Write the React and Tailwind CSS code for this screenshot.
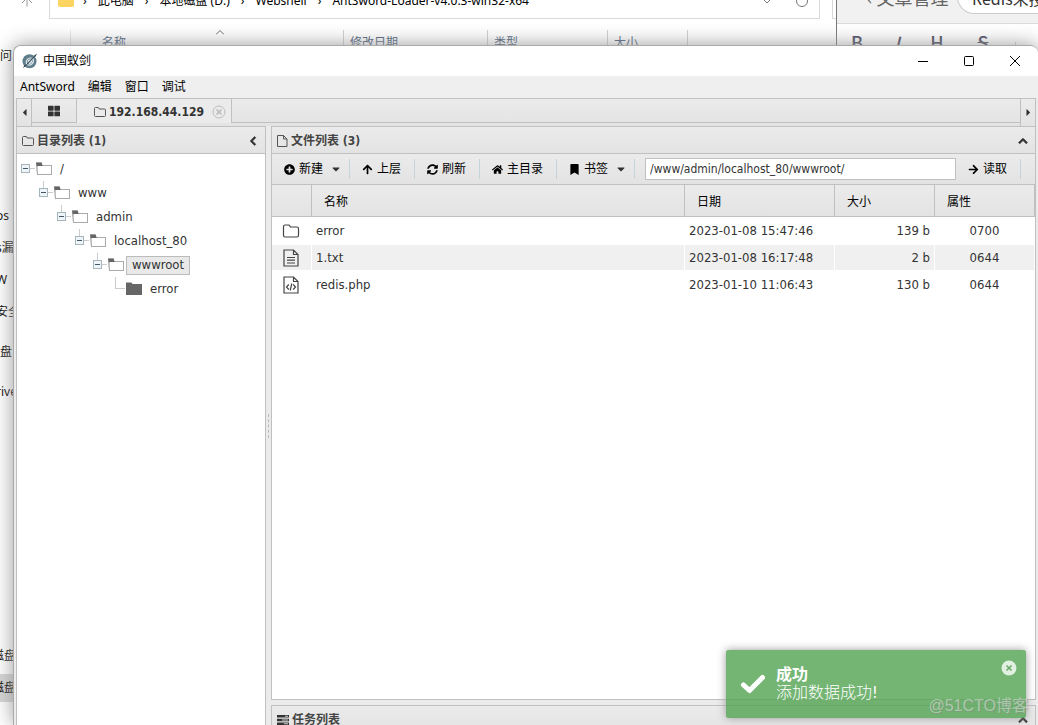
import {
    FaArrowRight,
    FaArrowUp,
    FaBookmark,
    FaCaretDown,
    FaCaretLeft,
    FaCaretRight,
    FaChevronLeft,
    FaChevronUp,
    FaHome,
    FaPlusCircle,
    FaSyncAlt,
    FaThLarge,
} from 'react-icons/fa';

const tree = {
    name: '/',
    children: [{
        name: 'www',
        children: [{
            name: 'admin',
            children: [{
                name: 'localhost_80',
                children: [{
                    name: 'wwwroot',
                    selected: true,
                    children: [{ name: 'error' }],
                }],
            }],
        }],
    }],
};

const files = [
    { icon: 'folder', name: 'error', date: '2023-01-08 15:47:46', size: '139 b', attr: '0700' },
    { icon: 'text', name: '1.txt', date: '2023-01-08 16:17:48', size: '2 b', attr: '0644' },
    { icon: 'code', name: 'redis.php', date: '2023-01-10 11:06:43', size: '130 b', attr: '0644' },
];

const sidebar = [
    { text: '问', pos: 'top-[47px] left-0' },
    { text: 'os', pos: 'top-[207px] -left-1' },
    { text: 's漏', pos: 'top-[239px] -left-1' },
    { text: 'W', pos: 'top-[271px] -left-1' },
    { text: '安全', pos: 'top-[303px] -left-1' },
    { text: '盘', pos: 'top-[343px] left-0' },
    { text: 'rive', pos: 'top-[383px] -left-1' },
    { text: '磁盘', pos: 'top-[647px] -left-2' },
    { text: '磁盘', pos: 'top-[679px] -left-2' },
];

/* ---------- icons ---------- */

const FolderOutline = ({ className }) => (
    <svg viewBox="0 0 12 10" className={className} fill="none" stroke="#555" aria-hidden="true">
        <path d="M.5 8.5v-7q0-1 1-1h2.500q.8 0 .9 1l.1.5h5.500q1 0 1 1v5.500q0 1-1 1H1.500q-1 0-1-1z" />
    </svg>
);

const FileOutline = ({ className }) => (
    <svg viewBox="0 0 11 12" className={className} fill="none" stroke="#555" aria-hidden="true">
        <path d="M.5.5h6l3.500 3.500v7.500H.5zM6.500.5V4H10" />
    </svg>
);

const Logo = () => (
    <svg viewBox="0 0 16 16" className="size-4" aria-hidden="true">
        <circle cx="7.500" cy="8.300" r="7" fill="#607d8b" />
        <path d="M4.800 11.500C3 8 6 4.200 9.500 5.200M10.800 5.500c2 4-1.500 7.500-5.300 6.300M6.300 9.500q-.3-2.500 2.500-2.700M9.500 7.500q.2 2.500-2.500 3" fill="none" stroke="#dfe8ec" strokeWidth="1.200" />
        <path d="M.8 15.200 2.500 12 4 12.500zM11.500 3l3.700-2.500-2 3.500z" fill="#37474f" />
        <path d="M2 14 14 2" stroke="#37474f" strokeWidth=".8" />
    </svg>
);

const Tasks = () => (
    <svg viewBox="0 0 12 10" className="h-[10px] w-3" aria-hidden="true">
        <path d="M0 0h12v2.500H0zM0 3.700h12v2.500H0zM0 7.400h12v2.500H0z" fill="#333" />
        <path d="M8 .8h3v1H8zM5 4.500h6v1H5zM7 8.200h4v1H7z" fill="#ccc" />
    </svg>
);

const FileIcon = ({ type }) => {
    if (type === 'folder') {
        return (
            <svg viewBox="0 0 18 18" className="size-[18px]" fill="none" stroke="#444" strokeWidth="1.200" aria-hidden="true">
                <path d="M1.500 13.500v-9q0-1.500 1.500-1.500h3.500q1 0 1.300.8l.5 1.200H15q1.500 0 1.500 1.500v7q0 1.500-1.500 1.500H3q-1.500 0-1.500-1.500z" />
            </svg>
        );
    }
    return (
        <svg viewBox="0 0 18 18" className="size-[18px]" fill="none" stroke="#444" strokeWidth="1.200" aria-hidden="true">
            <path d="M2 1h9.500L16 5.500V17H2zM11.500 1v4.500H16" />
            {type === 'text'
                ? <path d="M5 8.500h8M5 11.200h8M5 14h8" />
                : <path d="M6.800 8.500 4.500 11l2.300 2.500M11.200 8.500l2.300 2.500-2.300 2.500M9.800 7.500l-1.600 7" />}
        </svg>
    );
};

const TreeFolder = ({ open }) => (
    <svg viewBox="0 0 18 24" className="h-6 w-[18px]" aria-hidden="true">
        {open ? (
            <>
                <path d="M1 5.500h6V8h10v10H2L1 9z" fill="#aaa" />
                <path d="M1 5.500h5.500L7.500 8v1.500H2z" fill="#666" />
                <path d="M2.500 9H16v8H3z" fill="#fff" />
            </>
        ) : (
            <path d="M1 5.500h5.500l1 1.500H17v11H1z" fill="#666" />
        )}
    </svg>
);

/* ---------- directory tree ---------- */

const TreeNode = ({ node, depth = 0 }) => (
    <li>
        <div className="flex h-6 items-center">
            <svg viewBox="0 0 18 24" className="h-6 w-[18px]" fill="none" shapeRendering="crispEdges" aria-hidden="true">
                {depth > 0 && <path d="M8.500 0v12" stroke="#ccc" />}
                <path d="M8.500 11.500H18" stroke="#ccc" />
                {node.children && (
                    <>
                        <rect x="4.500" y="7.500" width="8" height="8" fill="#eef4f7" stroke="#a5b5bd" />
                        <path d="M6 11.500h5" stroke="#456" />
                    </>
                )}
            </svg>
            <TreeFolder open={!!node.children} />
            <button
                type="button"
                className={node.selected
                    ? 'ml-px h-[19px] border border-[#bbb] bg-[#e9e9e9] px-[5px] leading-4'
                    : 'ml-px h-[19px] border border-transparent px-[5px] leading-4'}
            >
                {node.name}
            </button>
        </div>
        {node.children && (
            <ul className="pl-[18px]">
                {node.children.map((c) => <TreeNode key={c.name} node={c} depth={depth + 1} />)}
            </ul>
        )}
    </li>
);

const PanelHeader = ({ icon, title, children }) => (
    <div className="flex h-[27px] shrink-0 items-center gap-[3px] border-b border-[#c0c0c0] bg-linear-to-b from-[#ebebeb] to-[#e3e3e3] pt-px pr-[7px] pl-[5px] text-xs font-bold text-[#444]">
        {icon}
        <h2 className="flex-1">{title}</h2>
        {children}
    </div>
);

const Chevron = ({ icon: Icon, label }) => (
    <button type="button" aria-label={label}>
        <Icon className="size-[10px] stroke-[#333] stroke-[40px] text-[#333]" />
    </button>
);

const ToolButton = ({ icon: Icon, label, menu }) => (
    <div className={menu
        ? 'flex shrink-0 items-center border-r border-[#c3d5da] pr-[7px]'
        : 'flex shrink-0 items-center border-r border-[#c3d5da] pr-[13px]'}
    >
        <button type="button" className="flex items-center gap-1 pl-3 whitespace-nowrap">
            <Icon className="h-[11px] w-auto" />
            {label}
            {menu && <FaCaretDown className="ml-[3px] h-3 w-auto text-[#333]" />}
        </button>
    </div>
);

/* ---------- windows behind ---------- */

const Explorer = () => (
    <div className="absolute inset-0 bg-white font-['Noto_Sans','Noto_Sans_CJK_SC',sans-serif] text-xs text-black">
        <div className="flex h-[19px]">
            <div className="w-[49px] pl-[21px]">
                <svg viewBox="0 0 12 8" className="h-2 w-3" fill="none" stroke="#999" aria-hidden="true">
                    <path d="M6 6.500V0M1 3l5-5 5 5" />
                </svg>
            </div>
            <div className="flex w-[771px] items-start gap-[9px] border border-t-0 border-[#d9d9d9] pl-2">
                <div className="h-[7px] w-4 rounded-b-xs bg-[#fcd462]" />
                <div className="-mt-[7px] flex flex-1 items-center gap-[11px] leading-4 whitespace-nowrap">
                    <span>›</span><span>此电脑</span>
                    <span>›</span><span>本地磁盘 (D:)</span>
                    <span>›</span><span>Webshell</span>
                    <span>›</span><span>AntSword-Loader-v4.0.3-win32-x64</span>
                </div>
                <svg viewBox="0 0 50 8" className="mr-2 h-2 w-[50px]" fill="none" stroke="#777" aria-hidden="true">
                    <path d="M2-1l4 4 4-4" />
                    <circle cx="41" cy="1" r="5.500" />
                </svg>
            </div>
            <div className="ml-3 flex-1 border-b border-l border-[#d9d9d9]" />
        </div>
        <div className="flex h-[27px] pt-[11px] text-[#4c607a]">
            <div className="w-[71px] border-r border-[#e5e5e5]" />
            <div className="relative w-[273px] border-r border-[#d0d0d0] pt-[5px] pl-[31px]">
                名称
                <svg viewBox="0 0 8 5" className="absolute top-0 left-[145px] h-[5px] w-2" fill="none" stroke="#666" aria-hidden="true">
                    <path d="M0 4.500l4-4 4 4" />
                </svg>
            </div>
            <div className="w-36 border-r border-[#d0d0d0] pt-[5px] pl-[6px]">修改日期</div>
            <div className="w-[120px] border-r border-[#d0d0d0] pt-[5px] pl-[6px]">类型</div>
            <div className="w-20 border-r border-[#d0d0d0] pt-[5px] pl-[6px]">大小</div>
        </div>
        <div className="absolute top-[674px] left-0 h-7 w-[15px] bg-[#d4d4d4]" />
        {sidebar.map((s) => (
            <span key={s.pos} className={`absolute leading-[18px] whitespace-nowrap ${s.pos}`}>{s.text}</span>
        ))}
    </div>
);

const Browser = () => (
    <div className="absolute top-0 right-0 left-[836px] h-14 border-l border-[#777] bg-white font-['Noto_Sans_CJK_SC',sans-serif]">
        <div className="flex h-6 items-start overflow-hidden border-b border-[#dcdcdc] bg-[#f1f1f1] text-lg leading-5 whitespace-nowrap text-[#666]">
            <span className="-mt-[13px] w-[120px] shrink-0 pl-[30px]">‹ 文章管理</span>
            <div className="-mt-5 h-[34px] flex-1 rounded-l-full border border-r-0 border-[#ccc] bg-white pt-[5px] pl-[14px] text-base text-[#333]">Redis未授</div>
        </div>
        <div className="flex h-8 gap-6 pt-2 pl-3 text-center text-lg leading-5 font-medium text-[#4a4a5e]">
            <span className="w-4">B</span>
            <span className="w-4 italic">I</span>
            <span className="w-4">H</span>
            <span className="ml-[6px] w-4 line-through">S</span>
            <span className="mt-[10px] border-l border-[#ccc]" />
        </div>
    </div>
);

/* ---------- main window ---------- */

const TitleBar = () => (
    <header className="flex h-[30px] shrink-0 items-center gap-[5px] bg-white pl-2 font-['Noto_Sans','Noto_Sans_CJK_SC',sans-serif] text-xs text-black">
        <Logo />
        <h1 className="flex-1">中国蚁剑</h1>
        <div className="flex gap-[26px] pr-[13px]">
            <button type="button" aria-label="最小化" className="size-5">
                <svg viewBox="0 0 20 20" stroke="#000" fill="none"><path d="M5 10.500h10" /></svg>
            </button>
            <button type="button" aria-label="最大化" className="size-5">
                <svg viewBox="0 0 20 20" stroke="#000" fill="none"><rect x="5.500" y="5.500" width="9" height="9" rx="1" /></svg>
            </button>
            <button type="button" aria-label="关闭" className="size-5">
                <svg viewBox="0 0 20 20" stroke="#000" fill="none"><path d="M5 5l10 10M15 5L5 15" /></svg>
            </button>
        </div>
    </header>
);

const MenuBar = () => (
    <nav className="flex h-[22px] shrink-0 items-center gap-[13px] bg-[#efefef] pl-[6px] font-['Noto_Sans','Noto_Sans_CJK_SC',sans-serif] text-xs text-black">
        <button type="button">AntSword</button>
        <button type="button">编辑</button>
        <button type="button">窗口</button>
        <button type="button">调试</button>
    </nav>
);

const TabBar = () => (
    <div className="flex h-7 shrink-0 border-x border-t border-[#c0c0c0] bg-linear-to-b from-[#ebebeb] to-[#e3e3e3]">
        <button type="button" aria-label="向左" className="flex w-[15px] items-center justify-center border-r border-[#c0c0c0]">
            <FaCaretLeft className="size-[11px]" />
        </button>
        <button type="button" aria-label="主页" className="flex h-6 w-[45px] items-center justify-center border-r border-b border-[#c0c0c0]">
            <FaThLarge className="size-3" />
        </button>
        <div className="flex h-6 w-[155px] items-center border-r border-[#c0c0c0] bg-[#ebebeb] pt-px pl-[17px] text-xs font-bold">
            <button type="button" className="flex items-center gap-[3px]">
                <FolderOutline className="h-[10px] w-3" />
                192.168.44.129
            </button>
            <button type="button" aria-label="关闭标签" className="ml-2">
                <svg viewBox="0 0 14 14" className="size-[14px]" fill="none" stroke="#bbb" aria-hidden="true">
                    <circle cx="7" cy="7" r="6" />
                    <path d="M4.500 4.500l5 5M9.500 4.500l-5 5" strokeWidth="1.600" />
                </svg>
            </button>
        </div>
        <div className="h-6 flex-1 border-b border-[#c0c0c0]" />
        <button type="button" aria-label="向右" className="flex w-[15px] items-center justify-center border-l border-[#c0c0c0]">
            <FaCaretRight className="size-[11px]" />
        </button>
    </div>
);

const Toolbar = () => (
    <div className="flex h-[31px] shrink-0 items-center border-b border-[#c0c0c0] bg-linear-to-b from-[#ebebeb] to-[#e3e3e3] text-xs text-black">
        <div className="flex h-5 shrink-0">
            <ToolButton icon={FaPlusCircle} label="新建" menu />
            <ToolButton icon={FaArrowUp} label="上层" />
            <ToolButton icon={FaSyncAlt} label="刷新" />
            <ToolButton icon={FaHome} label="主目录" />
            <ToolButton icon={FaBookmark} label="书签" menu />
        </div>
        <input
            type="text"
            aria-label="路径"
            defaultValue="/www/admin/localhost_80/wwwroot/"
            className="ml-[10px] h-[22px] min-w-0 flex-1 border border-[#c0c0c0] bg-white px-1 text-xs text-[#333] outline-none"
        />
        <div className="mr-[14px] flex h-5"><ToolButton icon={FaArrowRight} label="读取" /></div>
    </div>
);

const FileTable = () => (
    <table className="w-full table-fixed border-separate border-spacing-0 text-[13px] text-[#333]">
        <colgroup>
            <col className="w-10" />
            <col />
            <col className="w-[150px]" />
            <col className="w-[100px]" />
            <col className="w-[100px]" />
        </colgroup>
        <thead>
            <tr className="h-8 bg-linear-to-b from-[#ebebeb] to-[#e3e3e3] text-left text-xs text-black">
                {['', '名称', '日期', '大小', '属性'].map((h) => (
                    <th key={h} scope="col" className="border-r border-b border-[#c0c0c0] px-3 pt-[2px] pb-0 font-normal">{h}</th>
                ))}
            </tr>
        </thead>
        <tbody>
            {files.map((f) => (
                <tr key={f.name} className="h-[27px] even:bg-[#f0f0f0] *:border-y *:border-r *:border-white *:py-0">
                    <td className="pl-[10px]"><FileIcon type={f.icon} /></td>
                    <td className="px-1">{f.name}</td>
                    <td className="px-1">{f.date}</td>
                    <td className="px-1 text-right">{f.size}</td>
                    <td className="text-center">{f.attr}</td>
                </tr>
            ))}
        </tbody>
    </table>
);

const Toast = () => (
    <div role="status" className="absolute right-3 bottom-[7px] flex h-[68px] w-[300px] items-center rounded-xs bg-[#51a351]/80 pl-[14px] text-base leading-[18px] text-white shadow-[0_0_8px_#999]">
        <svg viewBox="0 0 26 20" className="h-5 w-[26px]" fill="none" stroke="#fff" strokeWidth="5" strokeLinecap="round" strokeLinejoin="round" aria-hidden="true">
            <path d="M3.500 11l6 5.500L22.500 3.500" />
        </svg>
        <div className="ml-[10px]">
            <div className="font-bold">成功</div>
            <div className="font-light">添加数据成功!</div>
        </div>
        <button type="button" aria-label="关闭通知" className="absolute top-[10px] right-[9px]">
            <svg viewBox="0 0 16 16" className="size-4" aria-hidden="true">
                <circle cx="8" cy="8" r="7.500" fill="#e1f0e1" />
                <path d="M5.500 5.500l5 5M10.500 5.500l-5 5" stroke="#6aab6a" strokeWidth="1.600" />
            </svg>
        </button>
    </div>
);

const AntSword = () => (
    <div className="absolute top-[45px] right-0 bottom-0 left-[13px] flex flex-col overflow-hidden rounded-t-lg border-t border-l border-[#aaa] bg-[#ebebeb] shadow-[0_0_20px_#999]">
        <TitleBar />
        <MenuBar />
        <div className="flex min-h-0 flex-1 flex-col px-[2px]">
            <TabBar />
            <div className="flex min-h-0 flex-1">
                <aside className="flex w-[250px] shrink-0 flex-col border-x border-t border-[#c0c0c0] bg-white">
                    <PanelHeader icon={<FolderOutline className="h-[10px] w-3" />} title="目录列表 (1)">
                        <Chevron icon={FaChevronLeft} label="折叠" />
                    </PanelHeader>
                    <ul className="pt-[3px] text-[13px]"><TreeNode node={tree} /></ul>
                </aside>
                <div className="flex w-[5px] shrink-0 items-center justify-center">
                    <div className="h-6 border-l border-dashed border-[#bbb]" />
                </div>
                <div className="flex min-w-0 flex-1 flex-col gap-[5px]">
                    <main className="flex min-h-0 flex-1 flex-col border border-[#c0c0c0] bg-white">
                        <PanelHeader icon={<FileOutline className="h-3 w-[11px]" />} title="文件列表 (3)">
                            <Chevron icon={FaChevronUp} label="收起文件列表" />
                        </PanelHeader>
                        <Toolbar />
                        <FileTable />
                    </main>
                    <section className="h-5 shrink-0 overflow-hidden border-x border-t border-[#c0c0c0]">
                        <PanelHeader icon={<Tasks />} title="任务列表">
                            <Chevron icon={FaChevronUp} label="收起任务列表" />
                        </PanelHeader>
                    </section>
                </div>
            </div>
        </div>
    </div>
);

export default function App() {
    return (
        <div className="relative h-screen overflow-hidden bg-white font-['DejaVu_Sans_Condensed','Noto_Sans_CJK_SC',sans-serif] text-[#333]">
            <Explorer />
            <Browser />
            <AntSword />
            <Toast />
            <div className="absolute right-[10px] bottom-[7px] font-['Liberation_Sans','Noto_Sans_CJK_SC',sans-serif] text-base text-white/40 [text-shadow:1px_1px_1px_#8888]">@51CTO博客</div>
        </div>
    );
}
